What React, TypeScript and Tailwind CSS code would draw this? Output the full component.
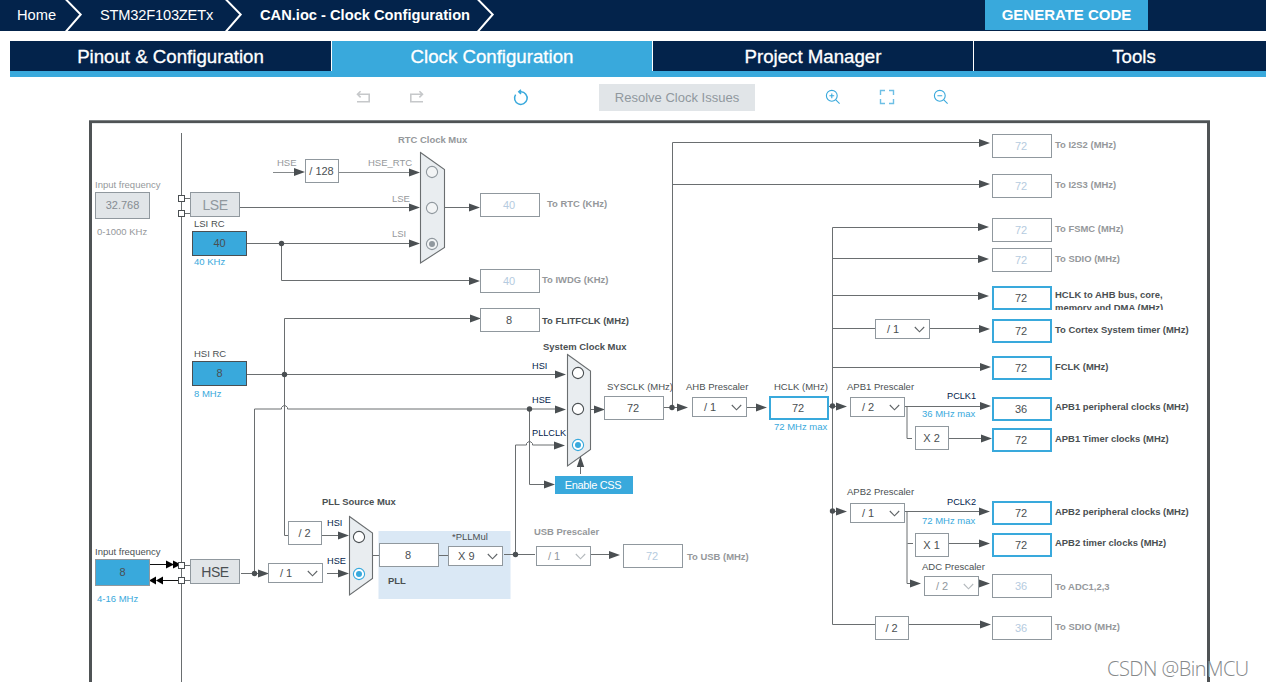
import React from "react";

const ORIGIN_Y = 119;
const at = (x: number, y: number) => ({ left: x, top: y - ORIGIN_Y });

type Tone = "dark" | "muted" | "navy" | "blue";
const toneClass: Record<Tone, string> = {
  dark: "text-[#4a4f52]",
  muted: "text-[#95989b]",
  navy: "text-[#03234b]",
  blue: "text-[#39a9dc]",
};

/* Labels: [x, vertical centre, text, tone] */
type LabelRow = [number, number, string, Tone];

const labels: LabelRow[] = [
  [95, 185, "Input frequency", "muted"],
  [97, 232, "0-1000 KHz", "muted"],
  [194, 224, "LSI RC", "dark"],
  [194, 262, "40 KHz", "blue"],
  [277, 163, "HSE", "muted"],
  [368, 163, "HSE_RTC", "muted"],
  [392, 199, "LSE", "muted"],
  [392, 234, "LSI", "muted"],
  [194, 354, "HSI RC", "dark"],
  [194, 394, "8 MHz", "blue"],
  [95, 552, "Input frequency", "dark"],
  [97, 599, "4-16 MHz", "blue"],
  [532, 367, "HSI", "navy"],
  [532, 401, "HSE", "navy"],
  [532, 434, "PLLCLK", "navy"],
  [327, 524, "HSI", "navy"],
  [327, 562, "HSE", "navy"],
  [452, 537, "*PLLMul", "dark"],
  [607, 387, "SYSCLK (MHz)", "dark"],
  [686, 387, "AHB Prescaler", "dark"],
  [774, 387, "HCLK (MHz)", "dark"],
  [774, 427, "72 MHz max", "blue"],
  [847, 387, "APB1 Prescaler", "dark"],
  [947, 397, "PCLK1", "navy"],
  [922, 414, "36 MHz max", "blue"],
  [847, 492, "APB2 Prescaler", "dark"],
  [947, 503, "PCLK2", "navy"],
  [922, 521, "72 MHz max", "blue"],
  [922, 567, "ADC Prescaler", "dark"],
];

const boldLabels: LabelRow[] = [
  [398, 140, "RTC Clock Mux", "muted"],
  [547, 204, "To RTC (KHz)", "muted"],
  [542, 280, "To IWDG (KHz)", "muted"],
  [542, 321, "To FLITFCLK (MHz)", "dark"],
  [543, 347, "System Clock Mux", "dark"],
  [322, 502, "PLL Source Mux", "dark"],
  [388, 581, "PLL", "dark"],
  [534, 532, "USB Prescaler", "muted"],
  [687, 557, "To USB (MHz)", "muted"],
  [1055, 145, "To I2S2 (MHz)", "muted"],
  [1055, 185, "To I2S3 (MHz)", "muted"],
  [1055, 229, "To FSMC (MHz)", "muted"],
  [1055, 259, "To SDIO (MHz)", "muted"],
  [1055, 330, "To Cortex System timer (MHz)", "dark"],
  [1055, 367, "FCLK (MHz)", "dark"],
  [1055, 407, "APB1 peripheral clocks (MHz)", "dark"],
  [1055, 439, "APB1 Timer clocks (MHz)", "dark"],
  [1055, 512, "APB2 peripheral clocks (MHz)", "dark"],
  [1055, 543, "APB2 timer clocks (MHz)", "dark"],
  [1055, 587, "To ADC1,2,3", "muted"],
  [1055, 627, "To SDIO (MHz)", "muted"],
];

/* Value boxes, 60 x 24: [x, y, value, kind] */
type Kind = "off" | "plain" | "active";
const values: [number, number, string, Kind][] = [
  [480, 193, "40", "off"],
  [480, 269, "40", "off"],
  [480, 308, "8", "plain"],
  [604, 396, "72", "plain"],
  [769, 396, "72", "active"],
  [379, 543, "8", "plain"],
  [623, 544, "72", "off"],
  [992, 134, "72", "off"],
  [992, 174, "72", "off"],
  [992, 218, "72", "off"],
  [992, 248, "72", "off"],
  [992, 286, "72", "active"],
  [992, 319, "72", "active"],
  [992, 356, "72", "active"],
  [992, 397, "36", "active"],
  [992, 428, "72", "active"],
  [992, 501, "72", "active"],
  [992, 533, "72", "active"],
  [992, 574, "36", "off"],
  [992, 616, "36", "off"],
];
const kindClass: Record<Kind, string> = {
  off: "border border-[#90989e] text-[#b5cbe0]",
  plain: "border border-[#90989e] text-[#4a4f52]",
  active: "border-2 border-[#39a9dc] text-[#4a4f52]",
};

/* Fixed factors, 34 x 24 */
const factors: [number, number, string][] = [
  [305, 159, "/ 128"],
  [288, 521, "/ 2"],
  [915, 426, "X 2"],
  [915, 533, "X 1"],
  [875, 616, "/ 2"],
];

/* Drop-down prescalers, 55 x 20 */
const selects: [number, number, string, boolean][] = [
  [875, 319, "/ 1", true],
  [692, 397, "/ 1", true],
  [850, 397, "/ 2", true],
  [850, 503, "/ 1", true],
  [924, 576, "/ 2", false],
  [268, 563, "/ 1", true],
  [448, 546, "X 9", true],
  [536, 546, "/ 1", false],
];

/* Oscillator sources */
const sources: [number, number, string, string][] = [
  [95, 192, "32.768", "w-[55px] h-[27px] border-[#90989e] bg-[#e1e5e8] text-[#858c92] text-[11px]"],
  [95, 559, "8", "w-[55px] h-[27px] border-[#90989e] bg-[#39a9dc] text-[#4a4f52] text-[11px]"],
  [190, 192, "LSE", "w-[50px] h-[25px] border-[#90989e] bg-[#e1e5e8] text-[#90989e] text-[14px] tracking-[-0.5px]"],
  [190, 559, "HSE", "w-[50px] h-[25px] border-[#90989e] bg-[#e1e5e8] text-[#4a4f52] text-[14px] tracking-[-0.5px]"],
  [192, 231, "40", "w-[55px] h-[25px] border-[#4a4f52] bg-[#39a9dc] text-[#4a4f52] text-[11px]"],
  [192, 361, "8", "w-[55px] h-[25px] border-[#4a4f52] bg-[#39a9dc] text-[#4a4f52] text-[11px]"],
];

const wires = [
  "M181.5 133V682",
  "M184 198.5H190M184 213.5H190M184 565.5H190M184 580.5H190",
  "M240 207.5H412",
  "M247 243.5H412",
  "M281.5 243.5V280.5H472",
  "M444 207.5H472",
  "M284.5 535.5V318.5H472M284.5 535.5H288",
  "M247 374.5H558",
  "M241 573.5H262M254.5 573.5V409H281.5V407.5Q284.5 403.5 287.5 407.5V409H558",
  "M322 535.5H342M327 573.5H342",
  "M373 555.5H379M439 555.5H448M504 554.5H535M591 554.5H612",
  "M515.5 554.5V445H526.5V443.5Q529.5 439.5 532.5 443.5V445H558",
  "M529.5 409.5V484.5H547",
  "M580.5 474V464",
  "M591 409.5H598M664 407.5H680",
  "M672.5 407.5V142.5H981M672.5 184.5H981",
  "M747 407.5H760",
  "M832.5 406V227.5H981M832.5 258.5H981M832.5 295.5H981M832.5 367.5H982",
  "M832.5 328.5H875M930 328.5H981",
  "M829 406.5H840M832.5 406V624.5H875M909 624.5H982",
  "M905 406.5H982M907 406.5V438.5H912M949 438.5H984",
  "M832 511.5H838M905 511.5H982M907 511.5V583.5H913M907.5 543.5H913M949 543.5H982",
];

/* Tips of the right-pointing arrows */
const tips: [number, number][] = [
  [305, 172], [420, 172.5], [420, 207.5], [420, 243.5], [480, 207.5], [480, 281],
  [481, 318.5], [566, 374.5], [566, 409.5], [565, 445.5], [555, 484.5],
  [605, 409.5], [688, 407.5], [767, 407.5], [847, 406.5], [847, 511.5],
  [990, 143], [990, 184], [989, 227], [989, 259], [989, 296], [990, 329], [991, 367],
  [991, 406], [992, 438.5], [990, 511.5], [990, 543.5], [990, 583.5], [991, 624.5],
  [921, 583.5], [269, 573.5], [349, 535.5], [349, 573.5], [620, 555],
];

const dots: [number, number][] = [
  [281.5, 243.5], [284.5, 374.5], [254.5, 573.5], [529.5, 409], [515.5, 554.5],
  [672, 407.5], [832.5, 406], [832.5, 511],
];

const pins = [198.5, 213.5, 565.5, 580.5];

function Radio({ x, y, on, muted }: { x: number; y: number; on?: boolean; muted?: boolean }) {
  const stroke = muted ? "#90989e" : on ? "#39a9dc" : "#4a4f52";
  return (
    <g>
      <circle cx={x} cy={y} r="5.6" fill={muted ? "#f2f4f5" : "#fff"} stroke={stroke} strokeWidth="1.1" />
      {on && <circle cx={x} cy={y} r="3" fill={stroke} />}
    </g>
  );
}

function Wiring() {
  return (
    <svg className="absolute inset-0" width="1266" height="563" viewBox="0 119 1266 563">
      <rect x="378.5" y="531" width="132" height="68" fill="#dae8f5" />
      <g fill="none" stroke="#6a6e70" strokeWidth="1">
        {wires.map((d) => (
          <path key={d} d={d} />
        ))}
        <path d="M273 172.5H296M339 172.5H412" stroke="#85898b" />
      </g>
      <g fill="#4a4f52">
        {tips.map(([x, y]) => (
          <path key={`${x}-${y}`} d={`M${x} ${y}l-11 -3.9v7.8z`} />
        ))}
        {dots.map(([x, y]) => (
          <circle key={`${x}-${y}`} cx={x} cy={y} r="2.7" />
        ))}
      </g>
      <path d="M150 564.5H178M157 580.5H179" stroke="#111" fill="none" />
      <path d="M174 564.5l-8 -4v8zM181 564.5l-8 -4v8zM149 580.5l7 -4v8zM156 580.5l7 -4v8z" fill="#000" />
      {pins.map((y) => (
        <rect key={y} x="178.5" y={y - 3} width="6" height="6" fill="#fff" stroke="#4a4f52" />
      ))}
      <g fill="#e9edf0" stroke="#6a6e70" strokeWidth="1.1">
        <path d="M420.5 152.5L444.5 169.5V247.5L420.5 263Z" />
        <path d="M567.5 354.5L590.5 371V449.5L567.5 466Z" />
        <path d="M349.5 516.5L372.5 533V578.5L349.5 595Z" />
      </g>
      <path d="M580.5 456l-3.7 11h7.4z" fill="#4a4f52" />
      <Radio x={432} y={172} muted />
      <Radio x={432} y={208} muted />
      <Radio x={432} y={244} on muted />
      <Radio x={578} y={373} />
      <Radio x={578} y={409} />
      <Radio x={578} y={445} on />
      <Radio x={359} y={537} />
      <Radio x={359} y={574} on />
    </svg>
  );
}

function Diagram() {
  return (
    <div className="relative h-[563px] w-[1266px]">
      <div className="absolute left-[89px] top-[2px] h-[561px] w-[1121px] border-x-[3px] border-t-2 border-[#4f5355] shadow-[inset_0_1px_0_#e4e7e9,0_-1px_0_#7d8284]" />
      <Wiring />
      {sources.map(([x, y, text, cls]) => (
        <div key={`${x}-${y}`} className={`absolute flex items-center justify-center border leading-none ${cls}`} style={at(x, y)}>
          {text}
        </div>
      ))}
      {values.map(([x, y, text, kind]) => (
        <div
          key={`${x}-${y}`}
          className={`absolute flex h-6 w-[60px] items-center justify-center bg-white pr-0.5 text-[11px] leading-none ${kindClass[kind]}`}
          style={at(x, y)}
        >
          {text}
        </div>
      ))}
      {factors.map(([x, y, text]) => (
        <div
          key={`${x}-${y}`}
          className="absolute flex h-6 w-[34px] items-center justify-center whitespace-nowrap border border-[#90989e] bg-white pr-px text-[11px] leading-none text-[#4a4f52]"
          style={at(x, y)}
        >
          {text}
        </div>
      ))}
      {selects.map(([x, y, text, enabled]) => (
        <div
          key={`${x}-${y}`}
          className={`absolute flex h-5 w-[55px] items-center justify-between border border-[#90989e] bg-white pr-1 text-[11px] leading-none ${
            text[0] === "X" ? "pl-[9px]" : "pl-[11px]"
          } ${enabled ? "text-[#4a4f52]" : "text-[#90989e]"}`}
          style={at(x, y)}
        >
          <span>{text}</span>
          <svg width="11" height="7" viewBox="0 0 11 7" fill="none" stroke={enabled ? "#5e6366" : "#b4b9bd"} strokeWidth="1.1">
            <path d="M0.8 1L5.5 5.8L10.2 1" />
          </svg>
        </div>
      ))}
      <button className="absolute left-[555px] top-[357px] flex h-[18px] w-[78px] items-center justify-center bg-[#39a9dc] pr-0.5 text-[11px] leading-none tracking-[-0.35px] text-white">
        Enable CSS
      </button>
      {labels.map(([x, y, text, tone]) => (
        <span
          key={`${x}-${y}`}
          className={`absolute -translate-y-1/2 whitespace-nowrap leading-none ${tone === "navy" ? "text-[9.2px]" : "text-[9.5px]"} ${toneClass[tone]}`}
          style={at(x, y)}
        >
          {text}
        </span>
      ))}
      {boldLabels.map(([x, y, text, tone]) => (
        <span
          key={`${x}-${y}`}
          className={`absolute -translate-y-1/2 whitespace-nowrap text-[9.45px] font-bold leading-none ${toneClass[tone]}`}
          style={at(x, y)}
        >
          {text}
        </span>
      ))}
      <div className="absolute left-[1055px] top-[170px] h-[21px] w-[125px] overflow-hidden text-[9.45px] font-bold leading-[12.5px] text-[#4a4f52]">
        HCLK to AHB bus, core, memory and DMA (MHz)
      </div>
      <div className="absolute left-[1107px] top-[537px] whitespace-nowrap font-['Open_Sans','Noto_Sans',sans-serif] text-[20px] font-light leading-[26px] tracking-[-0.5px] text-[#85888a] [text-shadow:1px_1px_0_#fff]">
        CSDN @BinMCU
      </div>
    </div>
  );
}

function Chevron() {
  return (
    <svg width="18" height="31" viewBox="0 0 18 31" fill="none" stroke="#fff" strokeWidth="2">
      <path d="M0.5 -1L15.7 14.5L0.5 32" />
    </svg>
  );
}

function Breadcrumbs() {
  return (
    <header className="flex h-[31px] items-stretch bg-[#03234b] text-[14.67px] leading-[30px] text-white">
      <span className="w-[65px] pl-[17px]">Home</span>
      <Chevron />
      <span className="w-[142px] pl-[17px] tracking-[-0.2px]">STM32F103ZETx</span>
      <Chevron />
      <span className="w-[234px] whitespace-nowrap pl-[17px] font-bold">CAN.ioc - Clock Configuration</span>
      <Chevron />
      <button className="ml-auto mr-[118px] h-[30px] w-[163px] bg-[#39a9dc] text-[15px] font-bold leading-[30px]">
        GENERATE CODE
      </button>
    </header>
  );
}

function Tabs() {
  const names = ["Pinout & Configuration", "Clock Configuration", "Project Manager", "Tools"];
  return (
    <nav className="ml-[10px] mt-[10px] flex h-9 overflow-hidden border-b-[6px] border-[#39a9dc] text-[18.67px] leading-[31px] text-white [-webkit-text-stroke:0.3px_#fff]">
      {names.map((name, i) => (
        <div
          key={name}
          className={`h-[30px] shrink-0 border-r border-white text-center ${i === 0 ? "w-[322px]" : "w-[321px]"} ${
            i === 1 ? "bg-[#39a9dc]" : "bg-[#03234b]"
          }`}
        >
          {name}
        </div>
      ))}
    </nav>
  );
}

function Toolbar() {
  return (
    <div className="flex h-[42px] items-start pt-[7px]">
      <svg className="ml-[356px] mt-[6px]" width="15" height="15" viewBox="0 0 15 15" fill="none" stroke="#c6c8ca" strokeWidth="1.6">
        <path d="M1.5 4.3H13.2V11.8H1M4.6 1.2L1.5 4.3L4.6 7.4" />
      </svg>
      <svg className="ml-[38px] mt-[6px]" width="15" height="15" viewBox="0 0 15 15" fill="none" stroke="#c6c8ca" strokeWidth="1.6">
        <path d="M13.5 4.3H1.8V11.8H14M10.4 1.2L13.5 4.3L10.4 7.4" />
      </svg>
      <svg className="ml-[88px] mt-[5px]" width="18" height="18" viewBox="0 0 18 18" fill="none" stroke="#39a9dc" strokeWidth="1.5">
        <path d="M3.6 5.6A6.3 6.3 0 1 0 9 2.8H7M9 0.8L6.8 2.8L9 4.9" />
      </svg>
      <button className="ml-[69px] h-[27px] w-[156px] bg-[#e1e5e8] text-[13px] leading-[27px] text-[#90989e]">Resolve Clock Issues</button>
      <svg className="ml-[70px] mt-[5px]" width="16" height="16" viewBox="0 0 16 16" fill="none" stroke="#39a9dc" strokeWidth="1.1">
        <circle cx="6.8" cy="6.8" r="5.4" />
        <path d="M10.8 10.8L14.6 14.6M4.4 6.8H9.2M6.8 4.4V9.2" />
      </svg>
      <svg className="ml-[38px] mt-[5px]" width="16" height="16" viewBox="0 0 16 16" fill="none" stroke="#6dbfe5" strokeWidth="1.4">
        <path d="M1.5 6V1.5H6M10 1.5H14.5V6M14.5 10V14.5H10M6 14.5H1.5V10" />
      </svg>
      <svg className="ml-[38px] mt-[5px]" width="16" height="16" viewBox="0 0 16 16" fill="none" stroke="#39a9dc" strokeWidth="1.1">
        <circle cx="6.8" cy="6.8" r="5.4" />
        <path d="M10.8 10.8L14.6 14.6M4.4 6.8H9.2" />
      </svg>
    </div>
  );
}

export default function App() {
  return (
    <div className="h-[687px] w-[1266px] overflow-hidden bg-white font-['Liberation_Sans',Arial,sans-serif]">
      <Breadcrumbs />
      <Tabs />
      <Toolbar />
      <Diagram />
    </div>
  );
}
